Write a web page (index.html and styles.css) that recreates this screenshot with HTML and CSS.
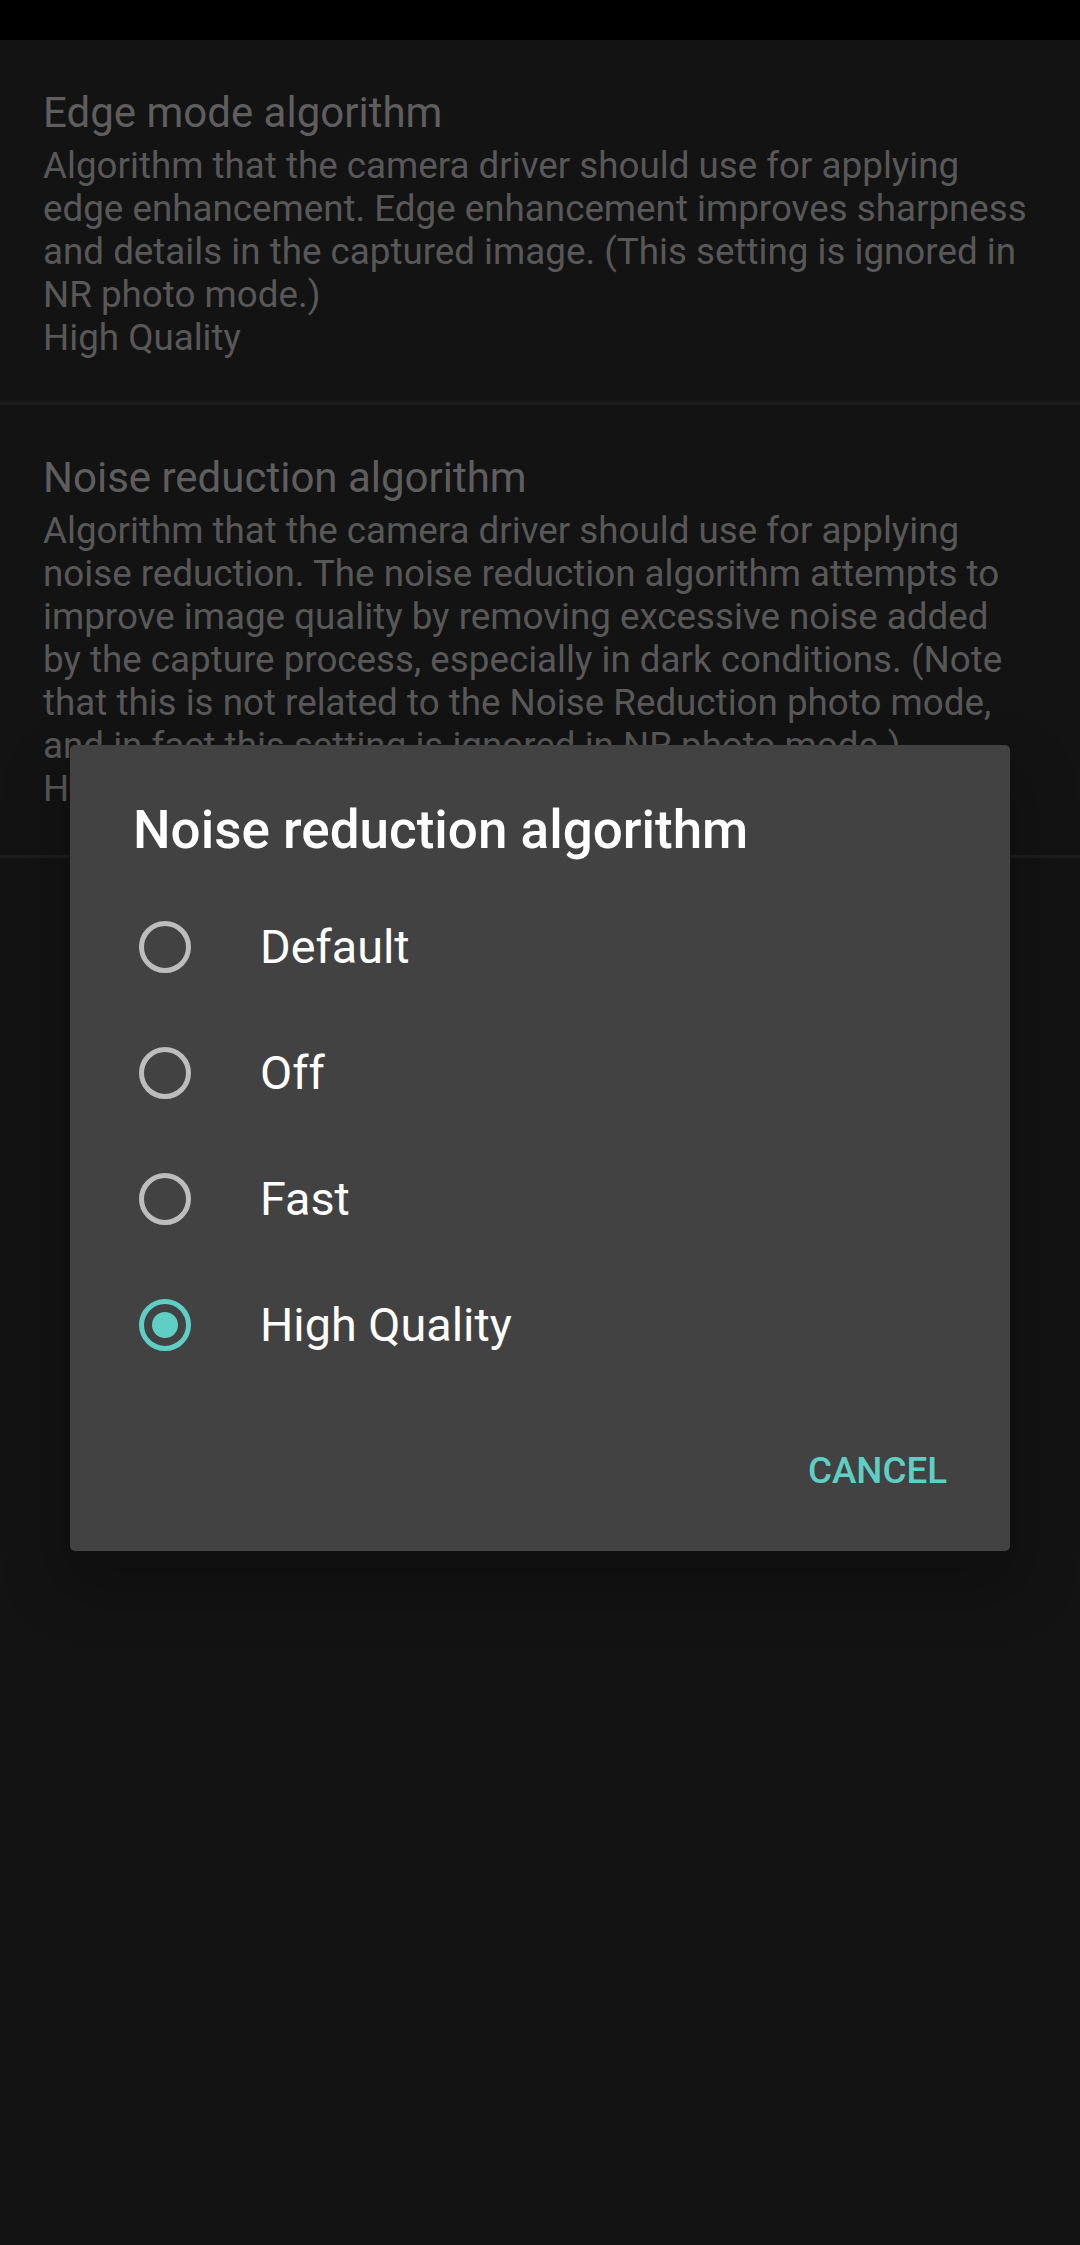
FILE: index.html
```html
<!DOCTYPE html>
<html lang="en">
<head>
<meta charset="utf-8">
<title>Noise reduction algorithm</title>
<link rel="stylesheet" href="styles.css">
</head>
<body>
<div class="screen">
  <div class="status-bar"></div>
  <div class="pref-list">
    <div class="pref">
      <div class="pref-title">Edge mode algorithm</div>
      <div class="pref-summary">Algorithm that the camera driver should use for applying<br>edge enhancement. Edge enhancement improves sharpness<br>and details in the captured image. (This setting is ignored in<br>NR photo mode.)<br>High Quality</div>
    </div>
    <div class="divider"></div>
    <div class="pref pref-second">
      <div class="pref-title">Noise reduction algorithm</div>
      <div class="pref-summary">Algorithm that the camera driver should use for applying<br>noise reduction. The noise reduction algorithm attempts to<br>improve image quality by removing excessive noise added<br>by the capture process, especially in dark conditions. (Note<br>that this is not related to the Noise Reduction photo mode,<br>and in fact this setting is ignored in NR photo mode.)<br>High Quality</div>
    </div>
    <div class="divider"></div>
  </div>

  <div class="dialog">
    <div class="dialog-title">Noise reduction algorithm</div>
    <div class="choices">
      <div class="choice">
        <svg class="radio" viewBox="0 0 52 52"><circle cx="26" cy="26" r="23.5" fill="none" stroke="#bdbdbd" stroke-width="5"/></svg>
        <span class="choice-label">Default</span>
      </div>
      <div class="choice">
        <svg class="radio" viewBox="0 0 52 52"><circle cx="26" cy="26" r="23.5" fill="none" stroke="#bdbdbd" stroke-width="5"/></svg>
        <span class="choice-label">Off</span>
      </div>
      <div class="choice">
        <svg class="radio" viewBox="0 0 52 52"><circle cx="26" cy="26" r="23.5" fill="none" stroke="#bdbdbd" stroke-width="5"/></svg>
        <span class="choice-label">Fast</span>
      </div>
      <div class="choice">
        <svg class="radio" viewBox="0 0 52 52"><circle cx="26" cy="26" r="23.5" fill="none" stroke="#5fcfc5" stroke-width="5"/><circle cx="26" cy="26" r="13" fill="#5fcfc5"/></svg>
        <span class="choice-label">High Quality</span>
      </div>
    </div>
    <div class="dialog-actions">
      <div class="btn-cancel">CANCEL</div>
    </div>
  </div>
</div>
</body>
</html>
```

FILE: styles.css
```css
html, body {
  margin: 0;
  padding: 0;
}

body {
  background: #131313;
  font-family: Roboto, "Noto Sans", "Liberation Sans", sans-serif;
}

.screen {
  position: relative;
  width: 1080px;
  height: 2245px;
  overflow: hidden;
  background: #131313;
}

.status-bar {
  height: 40px;
  background: #000000;
}

.pref {
  padding: 48px 20px 43px 43px;
}

.pref-second {
  padding-bottom: 45px;
}

.pref-title {
  font-size: 42px;
  line-height: 49px;
  color: #5e5e5e;
  white-space: nowrap;
}

.pref-summary {
  margin-top: 7px;
  font-size: 36.75px;
  line-height: 43px;
  color: #585858;
  white-space: nowrap;
}

.divider {
  height: 3px;
  background: #1d1d1d;
}

.dialog {
  position: absolute;
  left: 70px;
  top: 745px;
  width: 940px;
  background: #424242;
  border-radius: 5px;
  box-shadow: 0 30px 60px 10px rgba(0, 0, 0, 0.22);
  display: flex;
  flex-direction: column;
}

.dialog-title {
  padding: 55px 0 0 63px;
  font-size: 53px;
  line-height: 61.5px;
  font-weight: 500;
  color: #ffffff;
}

.choices {
  margin-top: 22px;
  display: flex;
  flex-direction: column;
}

.choice {
  height: 126px;
  display: flex;
  align-items: center;
  padding-left: 69px;
}

.radio {
  width: 52px;
  height: 52px;
  flex: none;
}

.choice-label {
  margin-left: 69px;
  font-size: 46.75px;
  color: #ffffff;
}

.dialog-actions {
  display: flex;
  justify-content: flex-end;
  padding: 36px 63px 33px 0;
}

.btn-cancel {
  height: 94px;
  display: flex;
  align-items: center;
  font-size: 36.75px;
  font-weight: 500;
  color: #5fcfc5;
}
```
